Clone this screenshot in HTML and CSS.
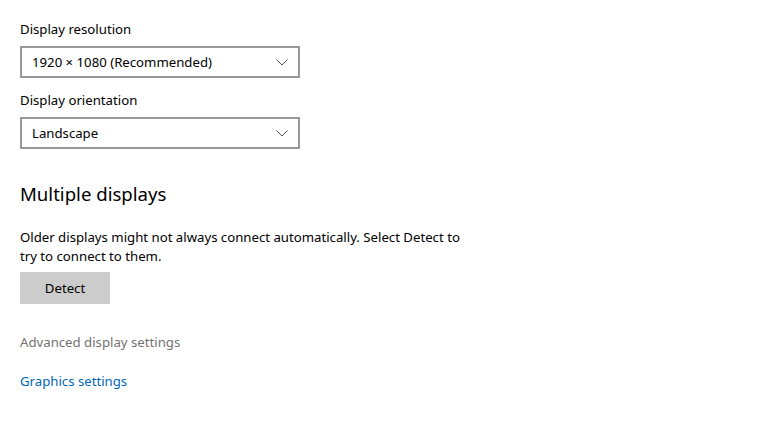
FILE: index.html
```html
<!DOCTYPE html>
<html lang="en">
<head>
<meta charset="utf-8">
<title>Display settings</title>
<link rel="stylesheet" href="styles.css">
</head>
<body>
<main class="page">
  <div class="field">
    <label class="label">Display resolution</label>
    <div class="select">
      <span class="select-value">1920 × 1080 (Recommended)</span>
      <svg class="chevron" width="12" height="7" viewBox="0 0 12 7"><path d="M0.5 0.5 L6 6 L11.5 0.5" fill="none" stroke="#555" stroke-width="1"/></svg>
    </div>
  </div>
  <div class="field field-second">
    <label class="label">Display orientation</label>
    <div class="select">
      <span class="select-value">Landscape</span>
      <svg class="chevron" width="12" height="7" viewBox="0 0 12 7"><path d="M0.5 0.5 L6 6 L11.5 0.5" fill="none" stroke="#555" stroke-width="1"/></svg>
    </div>
  </div>
  <h2 class="heading">Multiple displays</h2>
  <p class="desc">Older displays might not always connect automatically. Select Detect to<br>try to connect to them.</p>
  <button class="btn">Detect</button>
  <div class="link-muted">Advanced display settings</div>
  <div class="link">Graphics settings</div>
</main>
</body>
</html>
```
FILE: styles.css
```css
html, body {
  margin: 0;
  padding: 0;
  background: #ffffff;
}
body {
  font-family: "Noto Sans", "Open Sans", sans-serif;
  font-size: 13.2px;
  color: #000000;
}
.page {
  padding: 19px 20px 0 20px;
  display: flex;
  flex-direction: column;
  align-items: flex-start;
}
.field {
  display: flex;
  flex-direction: column;
  gap: 7px;
}
.field-second {
  margin-top: 12px;
}
.label {
  line-height: 20px;
  height: 20px;
}
.select {
  box-sizing: border-box;
  width: 280px;
  height: 32px;
  border: 2px solid #999999;
  display: flex;
  align-items: center;
  justify-content: space-between;
  padding: 0 10px 0 10px;
}
.select-value {
  line-height: 20px;
}
.chevron {
  display: block;
}
.heading {
  margin: 31px 0 0 0;
  font-size: 18.6px;
  font-weight: 400;
  line-height: 28px;
}
.desc {
  margin: 20px 0 0 0;
  line-height: 19px;
}
.btn {
  margin-top: 6px;
  width: 90px;
  height: 32px;
  border: none;
  background: #cccccc;
  font-family: inherit;
  font-size: 13.2px;
  color: #000;
  padding: 0;
}
.link-muted {
  margin-top: 28px;
  line-height: 20px;
  color: #737373;
}
.link {
  margin-top: 19px;
  line-height: 20px;
  color: #0067b8;
}
```
